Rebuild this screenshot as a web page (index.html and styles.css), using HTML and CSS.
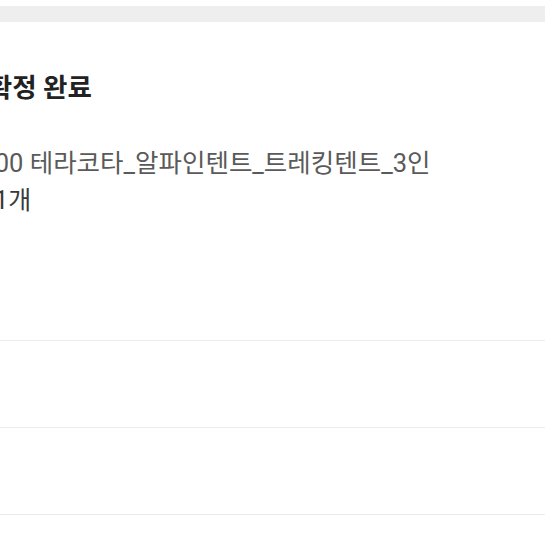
FILE: index.html
```html
<!DOCTYPE html>
<html lang="ko">
  <head>
    <meta charset="UTF-8" />
    <meta name="viewport" content="width=device-width, initial-scale=1.0" />
    <title>구매확정 완료</title>
    <link rel="stylesheet" href="styles.css">
  </head>
  <body>
    <div class="topbar"></div>

    <div class="order">
      <h2 class="order-title">구매확정 완료</h2>
      <p class="order-item">CMT00 테라코타_알파인텐트_트레킹텐트_3인</p>
      <p class="order-qty">수량: 1개</p>
    </div>

    <ul class="menu">
      <li></li>
      <li></li>
      <li></li>
    </ul>
  </body>
</html>
```

FILE: styles.css
```css
* {
  margin: 0;
  padding: 0;
  box-sizing: border-box;
  font-family: Roboto, "Noto Sans CJK KR", sans-serif;
}

body {
  background-color: #ffffff;
  color: #222;
  overflow: hidden;
  width: 545px;
  height: 545px;
}

.topbar {
  height: 16px;
  margin-top: 6px;
  background-color: #eeeeee;
}

.order {
  margin-left: -64px;
  padding-top: 49px;
  white-space: nowrap;
}

.order-title {
  margin-left: 3px;
  font-size: 26.5px;
  line-height: 34px;
  font-weight: 700;
  color: #222;
}

.order-item {
  margin-top: 42px;
  margin-left: 5px;
  font-size: 25.5px;
  line-height: 32px;
  color: #5a5a5a;
}

.order-qty {
  margin-top: 6px;
  font-size: 25px;
  line-height: 32px;
  color: #3a3a3a;
}

.menu {
  list-style: none;
  margin-top: 123px;
}

.menu li {
  height: 87px;
  border-top: 1px solid #ececec;
}
```
